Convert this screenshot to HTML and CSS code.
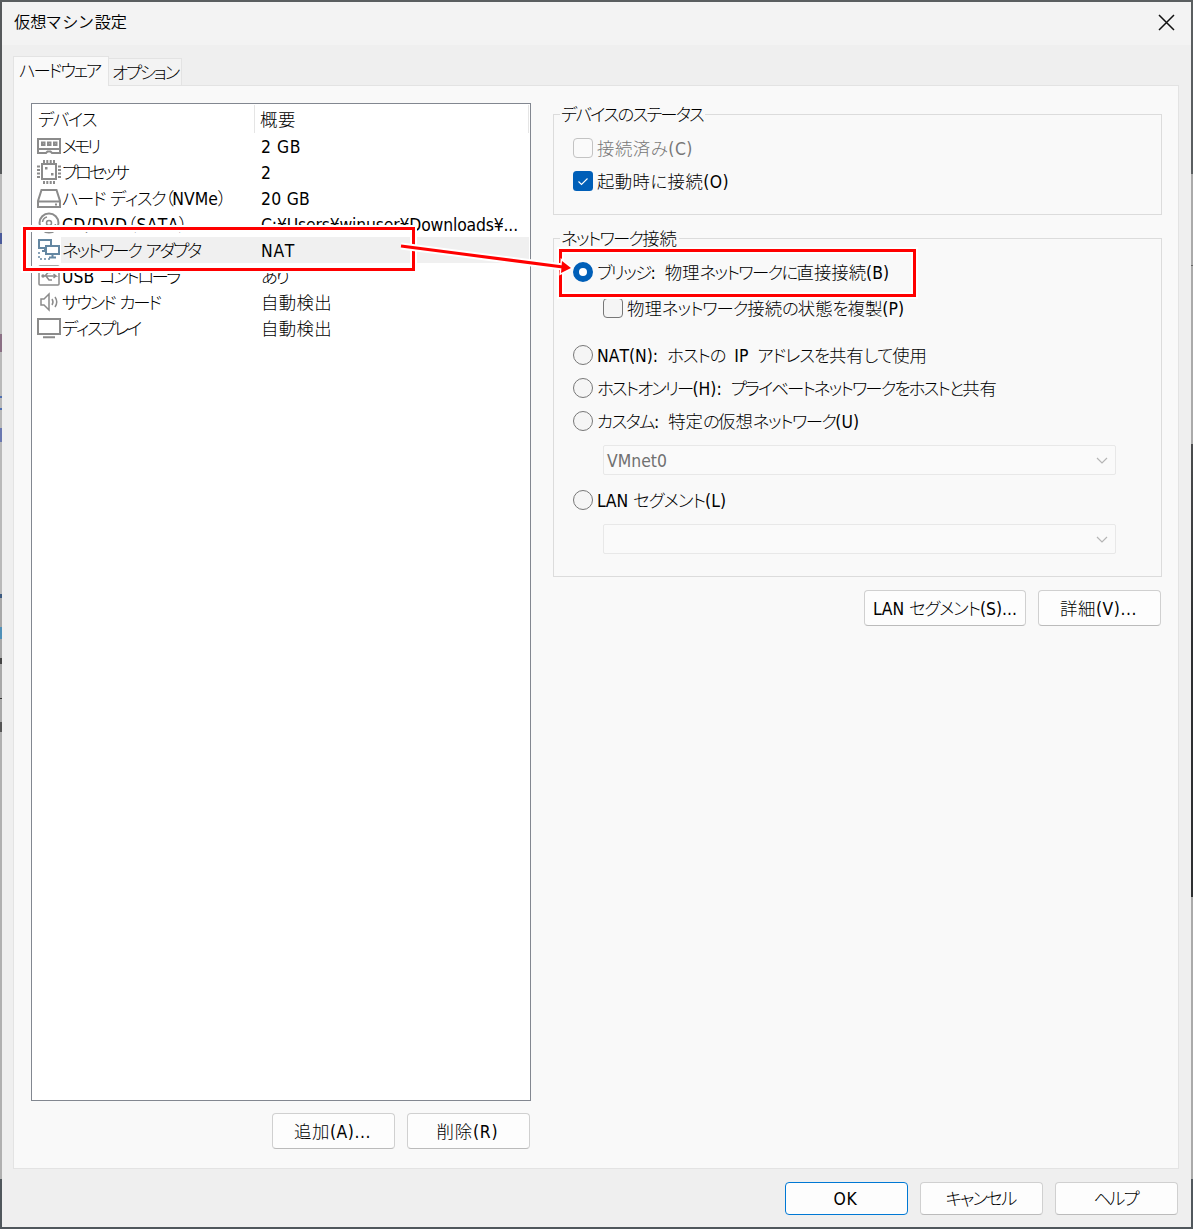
FILE: index.html
```html
<!DOCTYPE html>
<html lang="ja">
<head>
<meta charset="utf-8">
<title>仮想マシン設定</title>
<link rel="stylesheet" href="styles.css">
</head>
<body>
<div class="desktop">
  <div class="edge edge-left"></div>
  <main class="dialog">
    <header class="titlebar">
      <h1 class="title" data-w="113">仮想マシン設定</h1>
      <svg class="close" width="17" height="17" viewBox="0 0 17 17"><path d="M1 1L16 16M16 1L1 16"/></svg>
    </header>
    <nav class="tabs">
      <div class="tab tab-active"><span data-w="81">ハードウェア</span></div>
      <div class="tab tab-idle"><span data-w="66">オプション</span></div>
    </nav>
    <div class="panel">
      <section class="left">
        <div class="list">
          <div class="head"><div class="head-name"><span data-w="58">デバイス</span></div><div class="head-sum"><span data-w="36">概要</span></div></div>
          <div class="row">
            <svg class="icon" width="24" height="26" viewBox="0 0 24 26"><path class="g2" d="M1 6H23V20H15L13.500 18.500H10.500L9 20H1Z"/><path class="g2" d="M1 16H23"/><path class="g2" d="M5 9.500h2.500v2.500H5zM11 9.500h2.500v2.500H11zM17 9.500h2.500v2.500H17z"/></svg>
            <span class="name"><span data-w="36">メモリ</span></span><span class="sum"><span data-w="40">2 GB</span></span></div>
          <div class="row">
            <svg class="icon" width="24" height="26" viewBox="0 0 24 26"><path class="g2" d="M5 5H19V20H5Z"/><path class="g2" d="M7 1V4M10.300 1V4M13.700 1V4M17 1V4M7 22V25M10.300 22V25M13.700 22V25M17 22V25M0 7.500H3M0 11H3M0 14.500H3M0 18H3M21 7.500H24M21 11H24M21 14.500H24M21 18H24"/><path class="fill" d="M8 8h2.500v2.500H8zM14 14h2.500v2.500H14z"/></svg>
            <span class="name"><span data-w="65">プロセッサ</span></span><span class="sum"><span data-w="10">2</span></span></div>
          <div class="row">
            <svg class="icon" width="24" height="26" viewBox="0 0 24 26"><path class="g2" d="M4.500 5H19.500L23 16V22H1V16ZM1 16.500H23"/><path class="fill" d="M18 18.500h2v2h-2z"/></svg>
            <span class="name"><span data-w="163">ハード ディスク（NVMe）</span></span><span class="sum"><span data-w="49">20 GB</span></span></div>
          <div class="row">
            <svg class="icon" width="24" height="26" viewBox="0 0 24 26"><circle class="g2" cx="12" cy="12" r="9.500"/><circle class="g1" cx="12" cy="12" r="2.500"/><path class="g1" d="M5.500 11A6 6 0 0 1 10 6M18.500 13A6 6 0 0 1 14 18"/></svg>
            <span class="name"><span data-w="126">CD/DVD（SATA）</span></span><span class="sum"><span data-w="257">C:¥Users¥winuser¥Downloads¥...</span></span></div>
          <div class="row selected">
            <svg class="icon" width="24" height="26" viewBox="0 0 24 26"><path class="b" d="M9 11H2V3H14V8M9 9H22V17H9ZM15.500 17V20M12 20.500H19M8 11V13.500M5 14H8"/><path class="dots" d="M2 15V22H14"/></svg>
            <span class="name"><span data-w="138">ネットワーク アダプタ</span></span><span class="sum"><span data-w="34">NAT</span></span></div>
          <div class="row">
            <svg class="icon" width="24" height="26" viewBox="0 0 24 26"><rect class="g1" x="2" y="3" width="20" height="19" rx="1"/><path class="g1" d="M5 13H19L16.500 11M19 13L16.500 15M8 13L11 9.500H14M9 13L12 17H15"/><circle class="fill" cx="6" cy="13" r="1.700"/></svg>
            <span class="name"><span data-w="117">USB コントローラ</span></span><span class="sum"><span data-w="26">あり</span></span></div>
          <div class="row">
            <svg class="icon" width="24" height="26" viewBox="0 0 24 26"><path class="g1" d="M4 10H7L12 5V21L7 16H4ZM15 10Q17 13 15 16M18 8Q21.500 13 18 18"/></svg>
            <span class="name"><span data-w="98">サウンド カード</span></span><span class="sum"><span data-w="71">自動検出</span></span></div>
          <div class="row">
            <svg class="icon" width="24" height="26" viewBox="0 0 24 26"><path class="g2" d="M1 4H23V19H1ZM6 22.300H18"/></svg>
            <span class="name"><span data-w="78">ディスプレイ</span></span><span class="sum"><span data-w="71">自動検出</span></span></div>
        </div>
        <div class="buttons list-buttons">
          <button class="btn"><span data-w="77">追加(A)...</span></button>
          <button class="btn"><span data-w="62">削除(R)</span></button>
        </div>
      </section>
      <section class="right">
        <fieldset class="group status">
          <legend><span data-w="142">デバイスのステータス</span></legend>
          <label class="opt disabled"><i class="box"></i><span data-w="96">接続済み(C)</span></label>
          <label class="opt"><svg class="checked" width="20" height="20" viewBox="0 0 20 20"><rect width="20" height="20" rx="3.500"/><path d="M5.500 10.500L8.500 13.500L14.500 7.500"/></svg><span data-w="132">起動時に接続(O)</span></label>
        </fieldset>
        <fieldset class="group network">
          <legend><span data-w="116">ネットワーク接続</span></legend>
          <label class="opt spaced"><i class="radio on"></i><span data-w="292">ブリッジ: 物理ネットワークに直接接続(B)</span></label>
          <label class="opt sub"><i class="box"></i><span data-w="277">物理ネットワーク接続の状態を複製(P)</span></label>
          <label class="opt nat spaced"><i class="radio"></i><span data-w="330">NAT(N): ホストの IP アドレスを共有して使用</span></label>
          <label class="opt spaced"><i class="radio"></i><span data-w="400">ホストオンリー(H): プライベートネットワークをホストと共有</span></label>
          <label class="opt spaced"><i class="radio"></i><span data-w="262">カスタム: 特定の仮想ネットワーク(U)</span></label>
          <div class="combo"><span data-w="60">VMnet0</span><svg width="12" height="7" viewBox="0 0 12 7"><path d="M1 1L6 6L11 1"/></svg></div>
          <label class="opt lan"><i class="radio"></i><span data-w="129">LAN セグメント(L)</span></label>
          <div class="combo"><span></span><svg width="12" height="7" viewBox="0 0 12 7"><path d="M1 1L6 6L11 1"/></svg></div>
        </fieldset>
        <div class="buttons net-buttons">
          <button class="btn wide"><span data-w="144">LAN セグメント(S)...</span></button>
          <button class="btn"><span data-w="77">詳細(V)...</span></button>
        </div>
      </section>
    </div>
    <footer class="buttons footer">
      <button class="btn primary"><span data-w="24">OK</span></button>
      <button class="btn"><span data-w="70">キャンセル</span></button>
      <button class="btn"><span data-w="44">ヘルプ</span></button>
    </footer>
  </main>
  <div class="edge edge-right"></div>
  <svg class="callouts" width="1193" height="1229" viewBox="0 0 1193 1229">
    <g class="halo"><rect x="24.500" y="228.500" width="389" height="41"/><rect x="560.500" y="250.500" width="354" height="45"/></g>
    <g class="mark"><rect x="24.500" y="228.500" width="389" height="41"/><rect x="560.500" y="250.500" width="354" height="45"/></g>
    <path class="halo" d="M401 246L563 267"/>
    <path class="tip-halo" d="M562 261L571 268L561 273Z"/>
    <path class="mark" d="M401 246L563 267"/>
    <path class="tip" d="M562 261L571 268L561 273Z"/>
  </svg>
</div>
<script src="fit.js"></script>
</body>
</html>
```
FILE: styles.css
```css
* { box-sizing: border-box; }
body { margin: 0; font-family: "DejaVu Sans Condensed", "Noto Sans CJK JP", sans-serif; font-size: 17.4px; font-weight: 300; color: #000; overflow: hidden; }
.desktop { position: relative; display: flex; width: 1193px; height: 1229px; border-top: 2px solid #5a5e60; border-bottom: 2px solid #50575c; }
.edge { width: 2px; }
.edge-left { background: linear-gradient(#56595b 0 172px, #b9b9b9 172px 231px, #4a5a9a 231px 242px, #b9b9b9 242px 332px, #8a6f84 332px 350px, #b9b9b9 350px 394px, #4f6fb0 394px 396px, #b9b9b9 396px 406px, #4f6fb0 406px 408px, #b9b9b9 408px 426px, #6a78b0 426px 440px, #b9b9b9 440px 592px, #3c5a80 592px 596px, #a8a8a8 596px 625px, #4f90b8 625px 637px, #a8a8a8 637px 656px, #444 656px 662px, #a8a8a8 662px 696px, #333 696px 697px, #a8a8a8 697px 720px, #555 720px 730px, #b0b0b0 730px 1177px, #50575c 1177px); }
.edge-right { background: linear-gradient(#5a5e60 0 172px, #aaa 172px 263px, #666 263px 264px, #aaa 264px 442px, #4a4c4e 442px, #2d2f31 640px 895px, #aaa 895px 1177px, #50575c 1177px); }
.dialog { width: 1189px; display: flex; flex-direction: column; background: #efefef; }
.titlebar { height: 43px; flex: none; display: flex; align-items: center; justify-content: space-between; padding: 0 16px 2px 12px; background: #f3f3f3; }
.title { margin: 0 0 3px; font: 350 16.2px/22px "Noto Sans CJK JP", sans-serif; }
.close { fill: none; stroke: #111; stroke-width: 1.5; }
[data-w] { display: inline-block; white-space: pre; line-height: 22px; font-kerning: none; }
.kana { font-feature-settings: "palt"; }
.tabs { height: 40px; flex: none; display: flex; align-items: flex-end; padding-left: 11px; }
.tab { border: 1px solid #e3e3e3; border-bottom: 0; }
.tab-active { width: 96px; height: 30px; margin-bottom: -1px; padding: 3px 0 0 5px; background: #f9f9f9; position: relative; z-index: 1; }
.tab-idle { width: 73px; height: 27px; padding: 3px 0 0 3px; border-left: 0; background: #f3f3f3; }
.panel { width: 1166px; height: 1084px; flex: none; margin-left: 11px; display: flex; gap: 22px; padding: 17px 0 0 17px; background: #f9f9f9; border: 1px solid #e3e3e3; }
.left { width: 500px; }
.list { height: 998px; border: 1px solid #828790; background: #fff; }
.head { height: 29px; display: flex; align-items: flex-start; padding: 1px 1px 0 0; }
.head > div { height: 28px; padding: 4px 0 0 6px; border-right: 1px solid #e5e5e5; }
.head-name { width: 223px; }
.head-sum { width: 274px; }
.head-sum > span { margin-left: -1px; }
.row { height: 26px; display: flex; align-items: center; padding: 0 1px 0 5px; }
.icon { flex: none; fill: none; }
.g1, .g2 { fill: none; stroke: #8b8b8b; stroke-width: 2; }
.g1 { stroke-width: 1.5; }
.fill { fill: #8b8b8b; }
.b { fill: none; stroke: #6487a2; stroke-width: 2; }
.dots { stroke: #6487a2; stroke-width: 1.5; stroke-dasharray: 2 2; }
.name { width: 199px; height: 26px; padding: 3px 0 0 1px; }
.sum { flex: 1; height: 26px; padding: 3px 0 0 1px; }
.selected .name, .selected .sum { background: #f0f0f0; }
.buttons { display: flex; gap: 12px; justify-content: flex-end; }
.btn { width: 123px; height: 36px; padding: 1px 2px 0 0; font: inherit; color: inherit; background: #fdfdfd; border: 1px solid #d0d0d0; border-bottom-color: #bbb; border-radius: 4px; }
.wide { width: 162px; padding-right: 0; }
.list-buttons { margin: 12px 1px 0 0; }
.right { width: 609px; }
.group { margin: 0; padding: 0 0 0 19px; border: 1px solid #dcdcdc; min-width: 0; }
.group legend { height: 21px; margin-left: -13px; padding: 0 2px 0 1px; line-height: 21px; }
.status { height: 111px; padding-top: 6px; margin-top: 1px; }
.network { height: 349px; margin-top: 13px; padding-top: 6px; }
.opt { display: flex; align-items: center; height: 33px; gap: 4px; }
.opt > span { margin-top: 2px; }
.spaced { word-spacing: 4px; }
.box, .radio { width: 20px; height: 20px; flex: none; border: 1px solid #777; background: #f5f5f5; border-radius: 4px; }
.radio { border-radius: 50%; }
.on { border: 6px solid #005fb8; background: #fff; }
.checked rect { fill: #005fb8; }
.checked path { fill: none; stroke: #fff; stroke-width: 1.1; }
.disabled { color: #777; }
.disabled .box { border-color: #c3c3c3; background: #fafafa; }
.sub { margin: 3px 0 0 30px; }
.nat { margin-top: 14px; }
.lan { margin-top: 8px; }
.combo { width: 513px; height: 30px; margin: 8px 0 0 30px; padding: 1px 7px 0 3px; display: flex; align-items: center; justify-content: space-between; border: 1px solid #e8e8e8; border-radius: 2px; background: #fafafa; color: #707070; }
.combo svg { fill: none; stroke: #b5b5b5; stroke-width: 1.2; }
.net-buttons { margin: 13px 1px 0 0; }
.footer { padding: 13px 13px 0 0; }
.footer .btn { height: 33px; }
.footer .primary { border-color: #0078d4; }
.callouts { position: absolute; left: 0; top: -2px; }
.halo { fill: none; stroke: #fff; stroke-width: 7; }
.tip-halo { fill: #fff; stroke: #fff; stroke-width: 3; }
.mark { fill: none; stroke: #f00; stroke-width: 3; }
.tip { fill: #f00; }
```
FILE: fit.js
```js
// Sets each label to its design width by tightening its kana runs,
// or the whole label when it holds only one or two kana.
document.querySelectorAll("[data-w]").forEach(function (el) {
  var target = Number(el.dataset.w);
  var parts = el.textContent.split(/([\u3040-\u30ff\uff08\uff09]+)/).filter(Boolean);
  el.textContent = "";
  var kana = [];
  parts.forEach(function (part) {
    var span = document.createElement("span");
    span.textContent = part;
    if (/[\u3040-\u30ff\uff08\uff09]/.test(part)) {
      span.className = "kana";
      kana.push(span);
    }
    el.appendChild(span);
  });
  var length = function (n, s) { return n + s.textContent.length; };
  var runs = kana.reduce(length, 0) > 2 ? kana : Array.from(el.children);
  var count = runs.reduce(length, 0);
  var spacing = (target - el.getBoundingClientRect().width) / count;
  runs.forEach(function (s) { s.style.letterSpacing = spacing.toFixed(3) + "px"; });
});
```
